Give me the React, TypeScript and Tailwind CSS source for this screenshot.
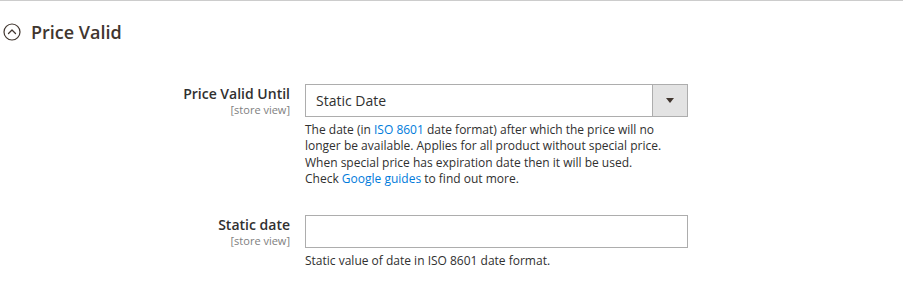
import React from 'react';

function CollapseIcon() {
  return (
    <svg width="18" height="18" viewBox="0 0 18 18" fill="none" className="shrink-0">
      <circle cx="9" cy="9" r="8" stroke="#41362f" strokeWidth="1.2" />
      <path d="M5.5 10.5 L9 7 L12.5 10.5" stroke="#41362f" strokeWidth="1.3" strokeLinecap="round" strokeLinejoin="round" />
    </svg>
  );
}

function FieldLabel({ title }: { title: string }) {
  return (
    <div className="text-right">
      <div className="text-[14px] font-semibold leading-[19px] text-[#303030]">{title}</div>
      <div className="text-[11px] leading-[14px] text-[#808080]">[store view]</div>
    </div>
  );
}

export default function App() {
  return (
    <div className="w-[903px] h-[299px] bg-white border-t border-[#cccccc] font-['Open_Sans',sans-serif] overflow-hidden">
      <div className="flex items-center gap-[10px] pl-[3px] pt-[19px]">
        <CollapseIcon />
        <span className="text-[18px] font-semibold leading-[24px] text-[#41362f]">Price Valid</span>
      </div>

      <div className="mt-[40px] grid grid-cols-[290px_383px] gap-x-[15px] gap-y-[28px]">
        <FieldLabel title="Price Valid Until" />
        <div>
          <div className="flex h-[33px] border border-[#adadad] bg-white">
            <div className="flex-1 flex items-center pl-[10px] text-[14px] text-[#303030]">Static Date</div>
            <div className="w-[35px] flex items-center justify-center border-l border-[#adadad] bg-[#e3e3e3]">
              <svg width="8" height="5" viewBox="0 0 8 5">
                <path d="M0 0 H8 L4 5 Z" fill="#41362f" />
              </svg>
            </div>
          </div>
          <p className="mt-[5px] max-w-[360px] text-[12px] leading-[16.3px] text-[#303030]">
            The date (in <a className="text-[#007bdb]">ISO 8601</a> date format) after which the price will no longer be
            available. Applies for all product without special price. When special price has expiration date then it
            will be used. Check <a className="text-[#007bdb]">Google guides</a> to find out more.
          </p>
        </div>

        <FieldLabel title="Static date" />
        <div>
          <div className="h-[33px] border border-[#adadad] bg-white" />
          <p className="mt-[5px] text-[12px] leading-[16.3px] text-[#303030]">
            Static value of date in ISO 8601 date format.
          </p>
        </div>
      </div>
    </div>
  );
}
